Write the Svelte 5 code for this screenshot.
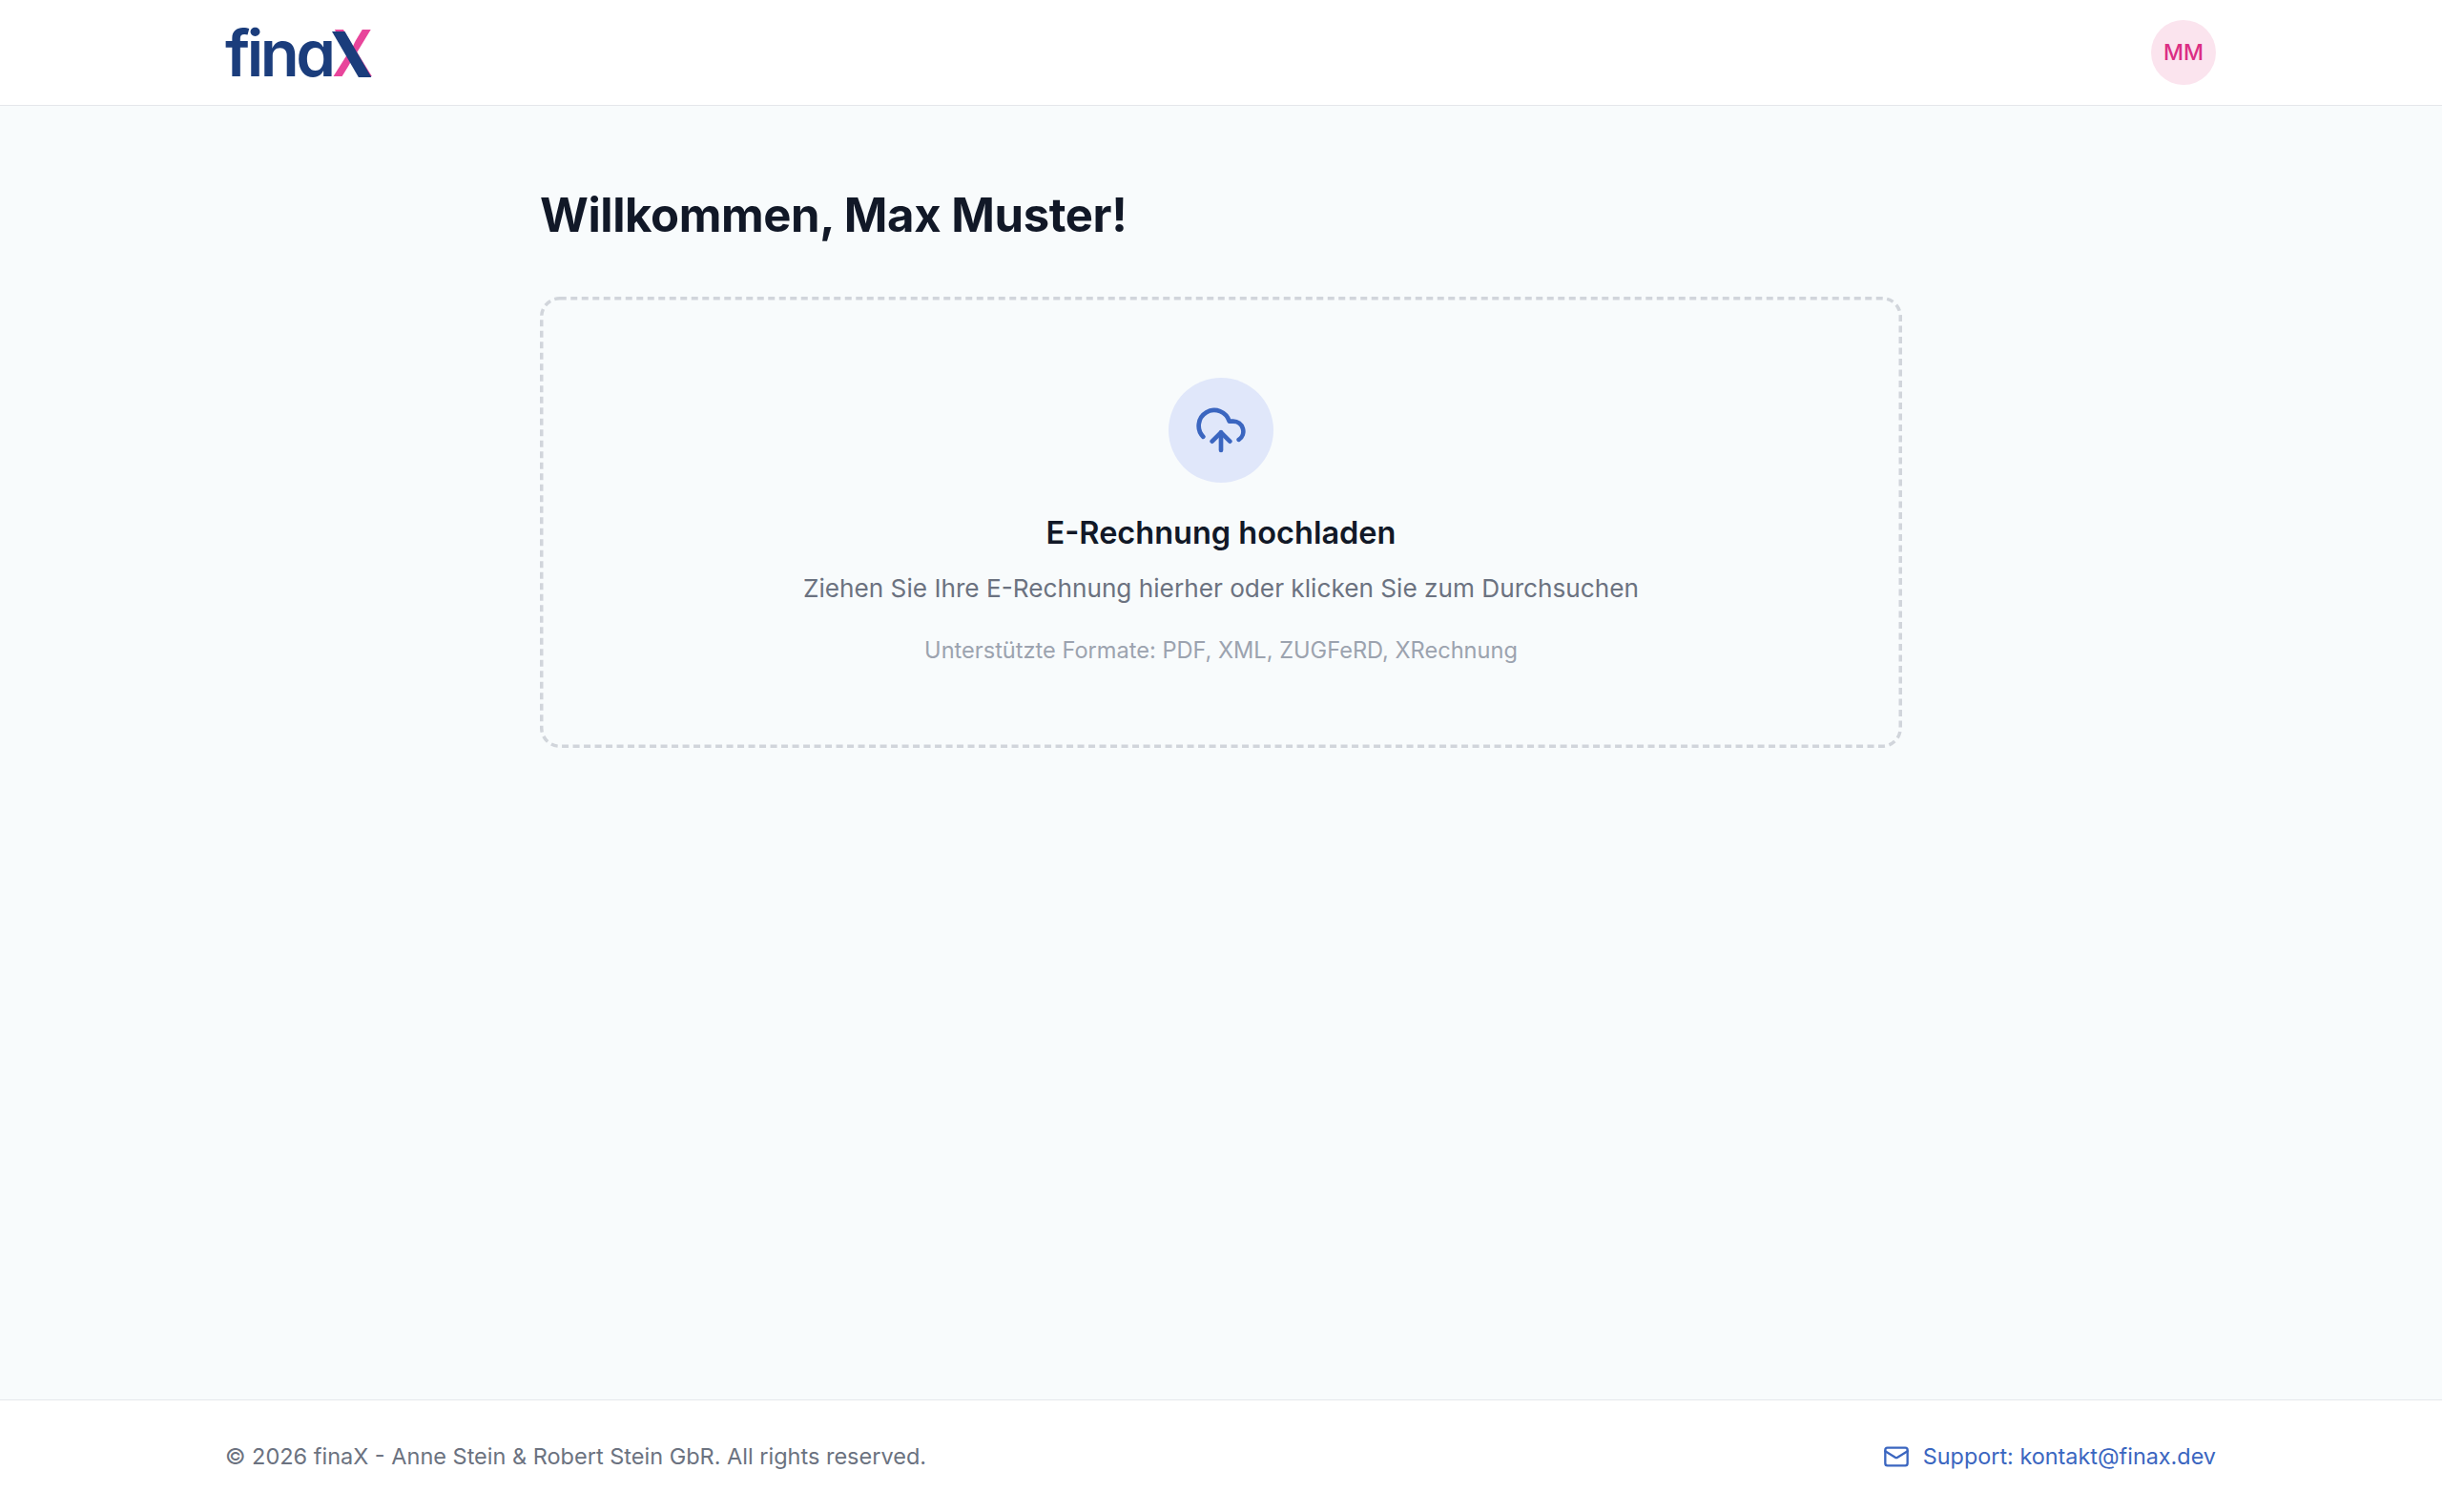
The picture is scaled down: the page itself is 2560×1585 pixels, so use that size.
<script>
	const user = { name: 'Max Muster', initials: 'MM' };
</script>

<div class="page">
	<header class="topbar">
		<div class="bar-inner">
			<div class="logo" aria-label="finaX">
				<span class="logo-word">fina</span><span class="logo-x">X<svg class="logo-stroke" viewBox="0 0 46 48" width="46" height="48"><polygon points="0,0 15,0 46,48 31,48" /></svg></span>
			</div>
			<div class="avatar">{user.initials}</div>
		</div>
	</header>

	<main class="content">
		<h1>Willkommen, {user.name}!</h1>

		<section class="dropzone">
			<svg class="dash" width="1428" height="473" fill="none">
				<rect x="1.75" y="1.75" width="1424.5" height="469.5" rx="19" />
			</svg>
			<div class="upload-icon">
				<svg viewBox="0 0 24 24" width="56" height="56" fill="none" stroke="currentColor" stroke-width="2" stroke-linecap="round" stroke-linejoin="round">
					<path d="M12 13v8" />
					<path d="M4 14.9A7 7 0 1 1 15.71 8h1.79a4.5 4.5 0 0 1 2.5 8.24" />
					<path d="m8 17 4-4 4 4" />
				</svg>
			</div>
			<h2>E-Rechnung hochladen</h2>
			<p class="hint">Ziehen Sie Ihre E-Rechnung hierher oder klicken Sie zum Durchsuchen</p>
			<p class="formats">Unterstützte Formate: PDF, XML, ZUGFeRD, XRechnung</p>
		</section>
	</main>

	<footer class="footer">
		<div class="bar-inner">
			<span class="copy">© 2026 finaX - Anne Stein &amp; Robert Stein GbR. All rights reserved.</span>
			<a class="support" href="mailto:kontakt@finax.dev">
				<svg viewBox="0 0 24 24" width="28" height="28" fill="none" stroke="currentColor" stroke-width="2" stroke-linecap="round" stroke-linejoin="round">
					<rect x="2" y="4" width="20" height="16" rx="2" />
					<path d="m22 7-8.97 5.7a1.94 1.94 0 0 1-2.06 0L2 7" />
				</svg>
				Support: kontakt@finax.dev
			</a>
		</div>
	</footer>
</div>

<style>
	:global(body) {
		margin: 0;
		background: #f8fbfc;
		font-family: Inter, 'Liberation Sans', sans-serif;
	}

	.page {
		display: flex;
		flex-direction: column;
		height: 1585px;
	}

	.topbar {
		height: 110px;
		background: #fff;
		border-bottom: 1px solid #e5e7eb;
		flex: none;
	}

	.bar-inner {
		display: flex;
		align-items: center;
		justify-content: space-between;
		height: 100%;
		width: 2087px;
		margin-left: 236px;
	}

	.logo {
		display: flex;
		align-items: baseline;
		font-size: 67px;
		font-weight: 600;
		font-feature-settings: 'cv11';
		line-height: 1;
		color: #1b3d7c;
	}

	.logo-word {
		letter-spacing: -3.6px;
	}

	.logo-x {
		position: relative;
		display: inline-block;
		color: #e8459b;
		transform: scaleX(0.9);
		transform-origin: left;
	}

	.logo-stroke {
		position: absolute;
		left: 0;
		bottom: 8px;
		fill: #1b3d7c;
	}

	.avatar {
		display: flex;
		align-items: center;
		justify-content: center;
		width: 68px;
		height: 68px;
		border-radius: 50%;
		background: #fbe4ee;
		color: #db2f84;
		font-size: 23px;
		font-weight: 500;
	}

	.content {
		flex: 1;
		box-sizing: border-box;
		width: 1428px;
		margin: 0 auto;
		padding-top: 79px;
	}

	h1 {
		margin: 0 0 49px;
		font-size: 49px;
		font-weight: 700;
		line-height: 72px;
		letter-spacing: -0.4px;
		color: #111827;
	}

	.dropzone {
		position: relative;
		display: flex;
		flex-direction: column;
		align-items: center;
		box-sizing: border-box;
		height: 473px;
		padding-top: 85px;
	}

	.dash {
		position: absolute;
		inset: 0;
	}

	.dash rect {
		stroke: #d1d5db;
		stroke-width: 3.5;
		stroke-dasharray: 7 4.5;
	}

	.upload-icon {
		display: flex;
		align-items: center;
		justify-content: center;
		width: 110px;
		height: 110px;
		border-radius: 50%;
		background: #e0e7fa;
		color: #3b66c0;
	}

	h2 {
		margin: 29px 0 0;
		font-size: 32.5px;
		font-weight: 600;
		line-height: 48px;
		color: #111827;
	}

	.hint {
		margin: 12px 0 0;
		font-size: 26.2px;
		line-height: 44px;
		color: #6b7280;
	}

	.formats {
		margin: 23px 0 0;
		font-size: 23.6px;
		line-height: 40px;
		color: #9ca3af;
	}

	.footer {
		box-sizing: border-box;
		height: 118px;
		background: #fff;
		border-top: 1px solid #e5e7eb;
		flex: none;
	}

	.copy {
		font-size: 23.5px;
		color: #6b7280;
	}

	.support {
		display: flex;
		align-items: center;
		gap: 14px;
		font-size: 23.4px;
		color: #3b66c0;
		text-decoration: none;
	}
</style>
